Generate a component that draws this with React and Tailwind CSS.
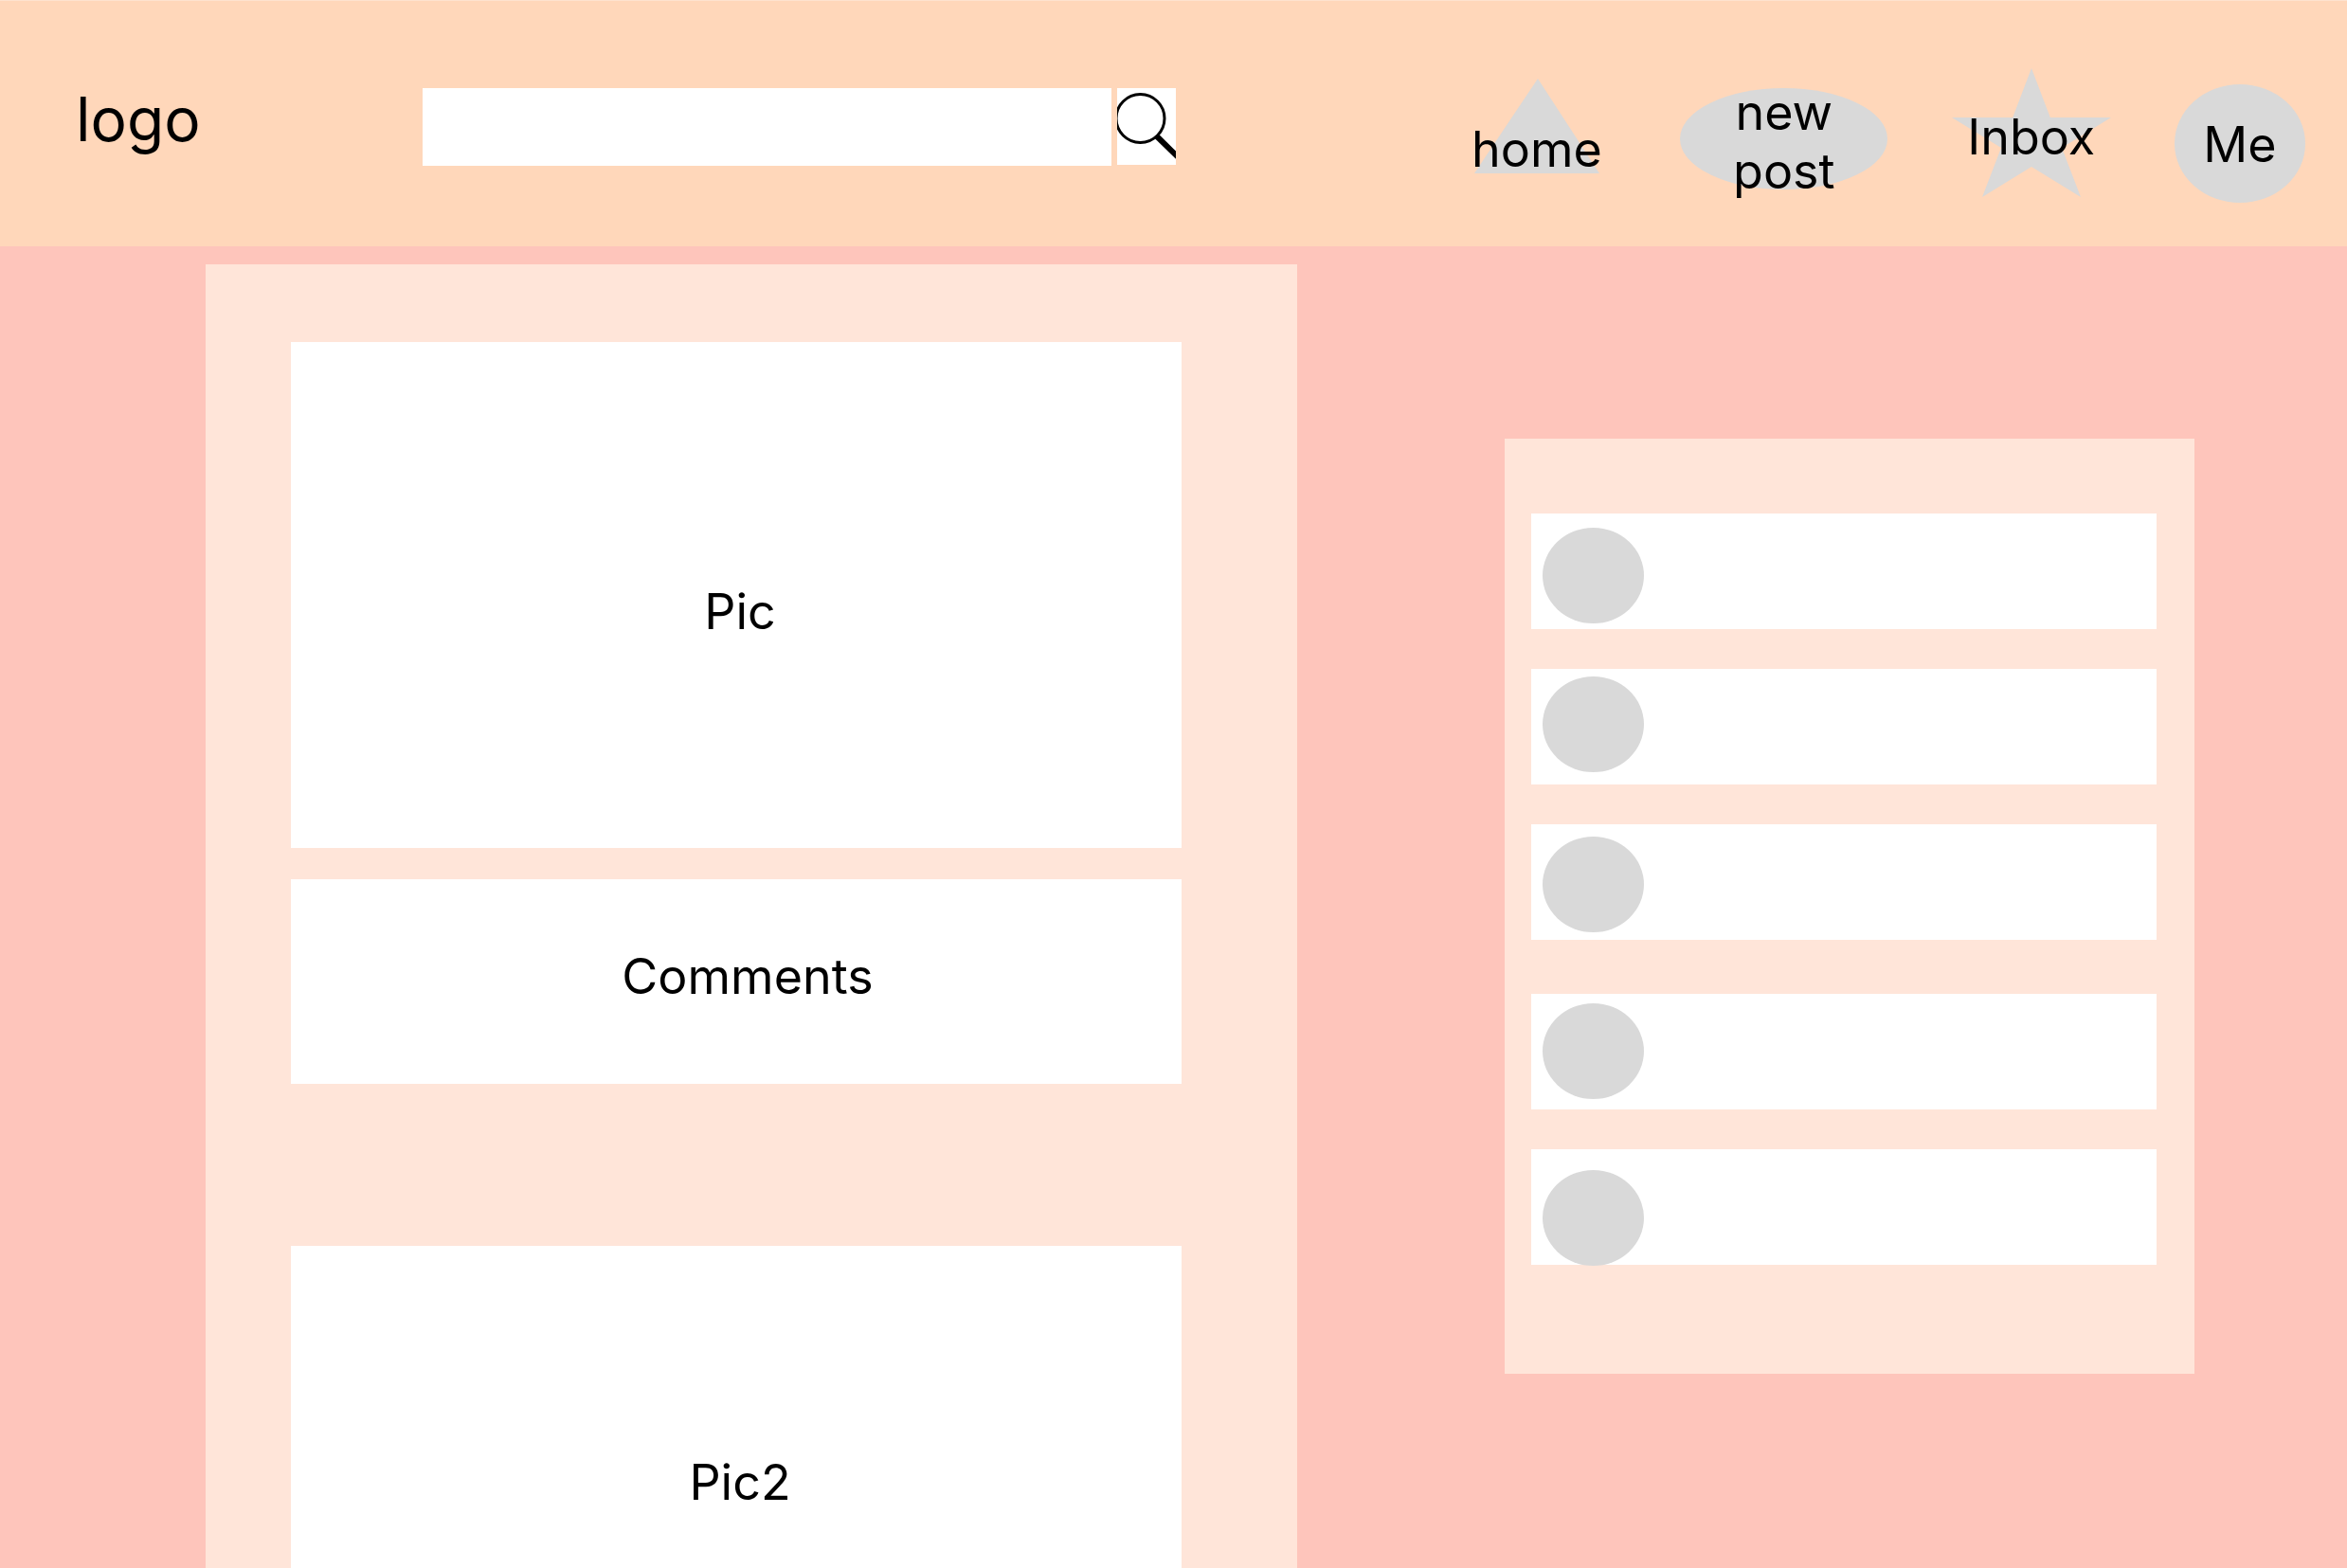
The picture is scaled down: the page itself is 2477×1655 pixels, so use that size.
const contacts = [
  { id: 1, row: "mb-[42px]", avatar: "mt-[15px]" },
  { id: 2, row: "mb-[42px]", avatar: "mt-2" },
  { id: 3, row: "mb-[57px]", avatar: "mt-[13px]" },
  { id: 4, row: "mb-[42px]", avatar: "mt-[10px]" },
  { id: 5, row: "", avatar: "mt-[22px]" },
];

function SearchIcon() {
  return (
    <svg viewBox="0 0 62 81" className="h-[81px] w-[62px]" fill="none" stroke="#000" aria-hidden="true">
      <circle cx="24.5" cy="32" r="25.5" strokeWidth="3" />
      <path d="M42 51 L66 74.5" strokeWidth="6" />
    </svg>
  );
}

function NavLink({ className, labelClass, shape, children }) {
  return (
    <a href="#" className={`grid justify-items-center ${className}`}>
      <span className="col-start-1 row-start-1">{shape}</span>
      <span className={`col-start-1 row-start-1 text-center ${labelClass}`}>{children}</span>
    </a>
  );
}

function Header() {
  return (
    <header className="grid h-[260px] grid-cols-[446fr_795fr_312fr_924fr] items-start border-t border-[#fee2cf] bg-[#ffd7ba]">
      <a href="#" className="pt-[87px] pl-20 text-[64px]/[76px]">
        logo
      </a>
      <form className="flex min-w-0 items-start gap-[6px] pt-[92px]" onSubmit={(e) => e.preventDefault()}>
        <input
          type="search"
          aria-label="Search"
          className="h-[82px] min-w-0 flex-1 bg-white px-6 outline-none"
        />
        <button type="submit" aria-label="Search" className="h-[81px] w-[62px] shrink-0 overflow-hidden bg-white">
          <SearchIcon />
        </button>
      </form>
      <nav className="col-start-4 flex items-start justify-between pr-11">
        <div className="w-[153px]">
          <NavLink
            className="mt-[82px] w-[132px]"
            labelClass="pt-11"
            shape={
              <svg viewBox="0 0 132 100" className="h-[100px] w-[132px]" fill="#d9d9d9" aria-hidden="true">
                <path d="M67 0 L132 100 H0 Z" />
              </svg>
            }
          >
            home
          </NavLink>
        </div>
        <NavLink
          className="mt-[87px] w-[219px]"
          labelClass="px-10"
          shape={<span className="mt-[5px] block h-[107px] w-[219px] rounded-[50%] bg-[#d9d9d9]" />}
        >
          new post
        </NavLink>
        <NavLink
          className="mt-[71px] w-[168px]"
          labelClass="pt-[42px]"
          shape={
            <svg viewBox="0 0 168 136" className="h-[136px] w-[168px]" fill="#d9d9d9" aria-hidden="true">
              <path d="M84 0 L103.8 52 H168 L116 84 L136 136 L84 104 L32 136 L52 84 L0 52 H64.2 Z" />
            </svg>
          }
        >
          Inbox
        </NavLink>
        <NavLink
          className="mt-[88px] w-[138px]"
          labelClass="pt-[33px]"
          shape={<span className="block h-[125px] w-[138px] rounded-[50%] bg-[#d9d9d9]" />}
        >
          Me
        </NavLink>
      </nav>
    </header>
  );
}

export default function App() {
  return (
    <div className="flex min-h-screen flex-col bg-[#fec5bb] font-['Inter',sans-serif] text-[52px]/[62px] text-black">
      <Header />
      <main className="grid flex-1 grid-cols-[217fr_1152fr_219fr_728fr_161fr]">
        <section aria-label="Feed" className="col-start-2 mt-[19px] flex flex-col bg-[#ffe5d9] pt-[82px] pr-[122px] pl-[90px]">
          <article className="mb-[171px]">
            <div className="flex h-[534px] items-center justify-center bg-white pt-9 pl-2">Pic</div>
            <div className="mt-[33px] flex h-[216px] items-center justify-center bg-white pb-[10px] pl-6">Comments</div>
          </article>
          <article className="flex flex-1 justify-center bg-white pt-[219px] pl-2">Pic2</article>
        </section>
        <aside aria-label="Contacts" className="col-start-4 mt-[203px] self-start bg-[#ffe5d9] pt-[79px] pr-10 pb-[115px] pl-7">
          <ul>
            {contacts.map((c) => (
              <li key={c.id} className={`flex h-[122px] items-start bg-white pl-3 ${c.row}`}>
                <span className={`h-[101px] w-[107px] rounded-[50%] bg-[#d9d9d9] ${c.avatar}`} />
              </li>
            ))}
          </ul>
        </aside>
      </main>
    </div>
  );
}
